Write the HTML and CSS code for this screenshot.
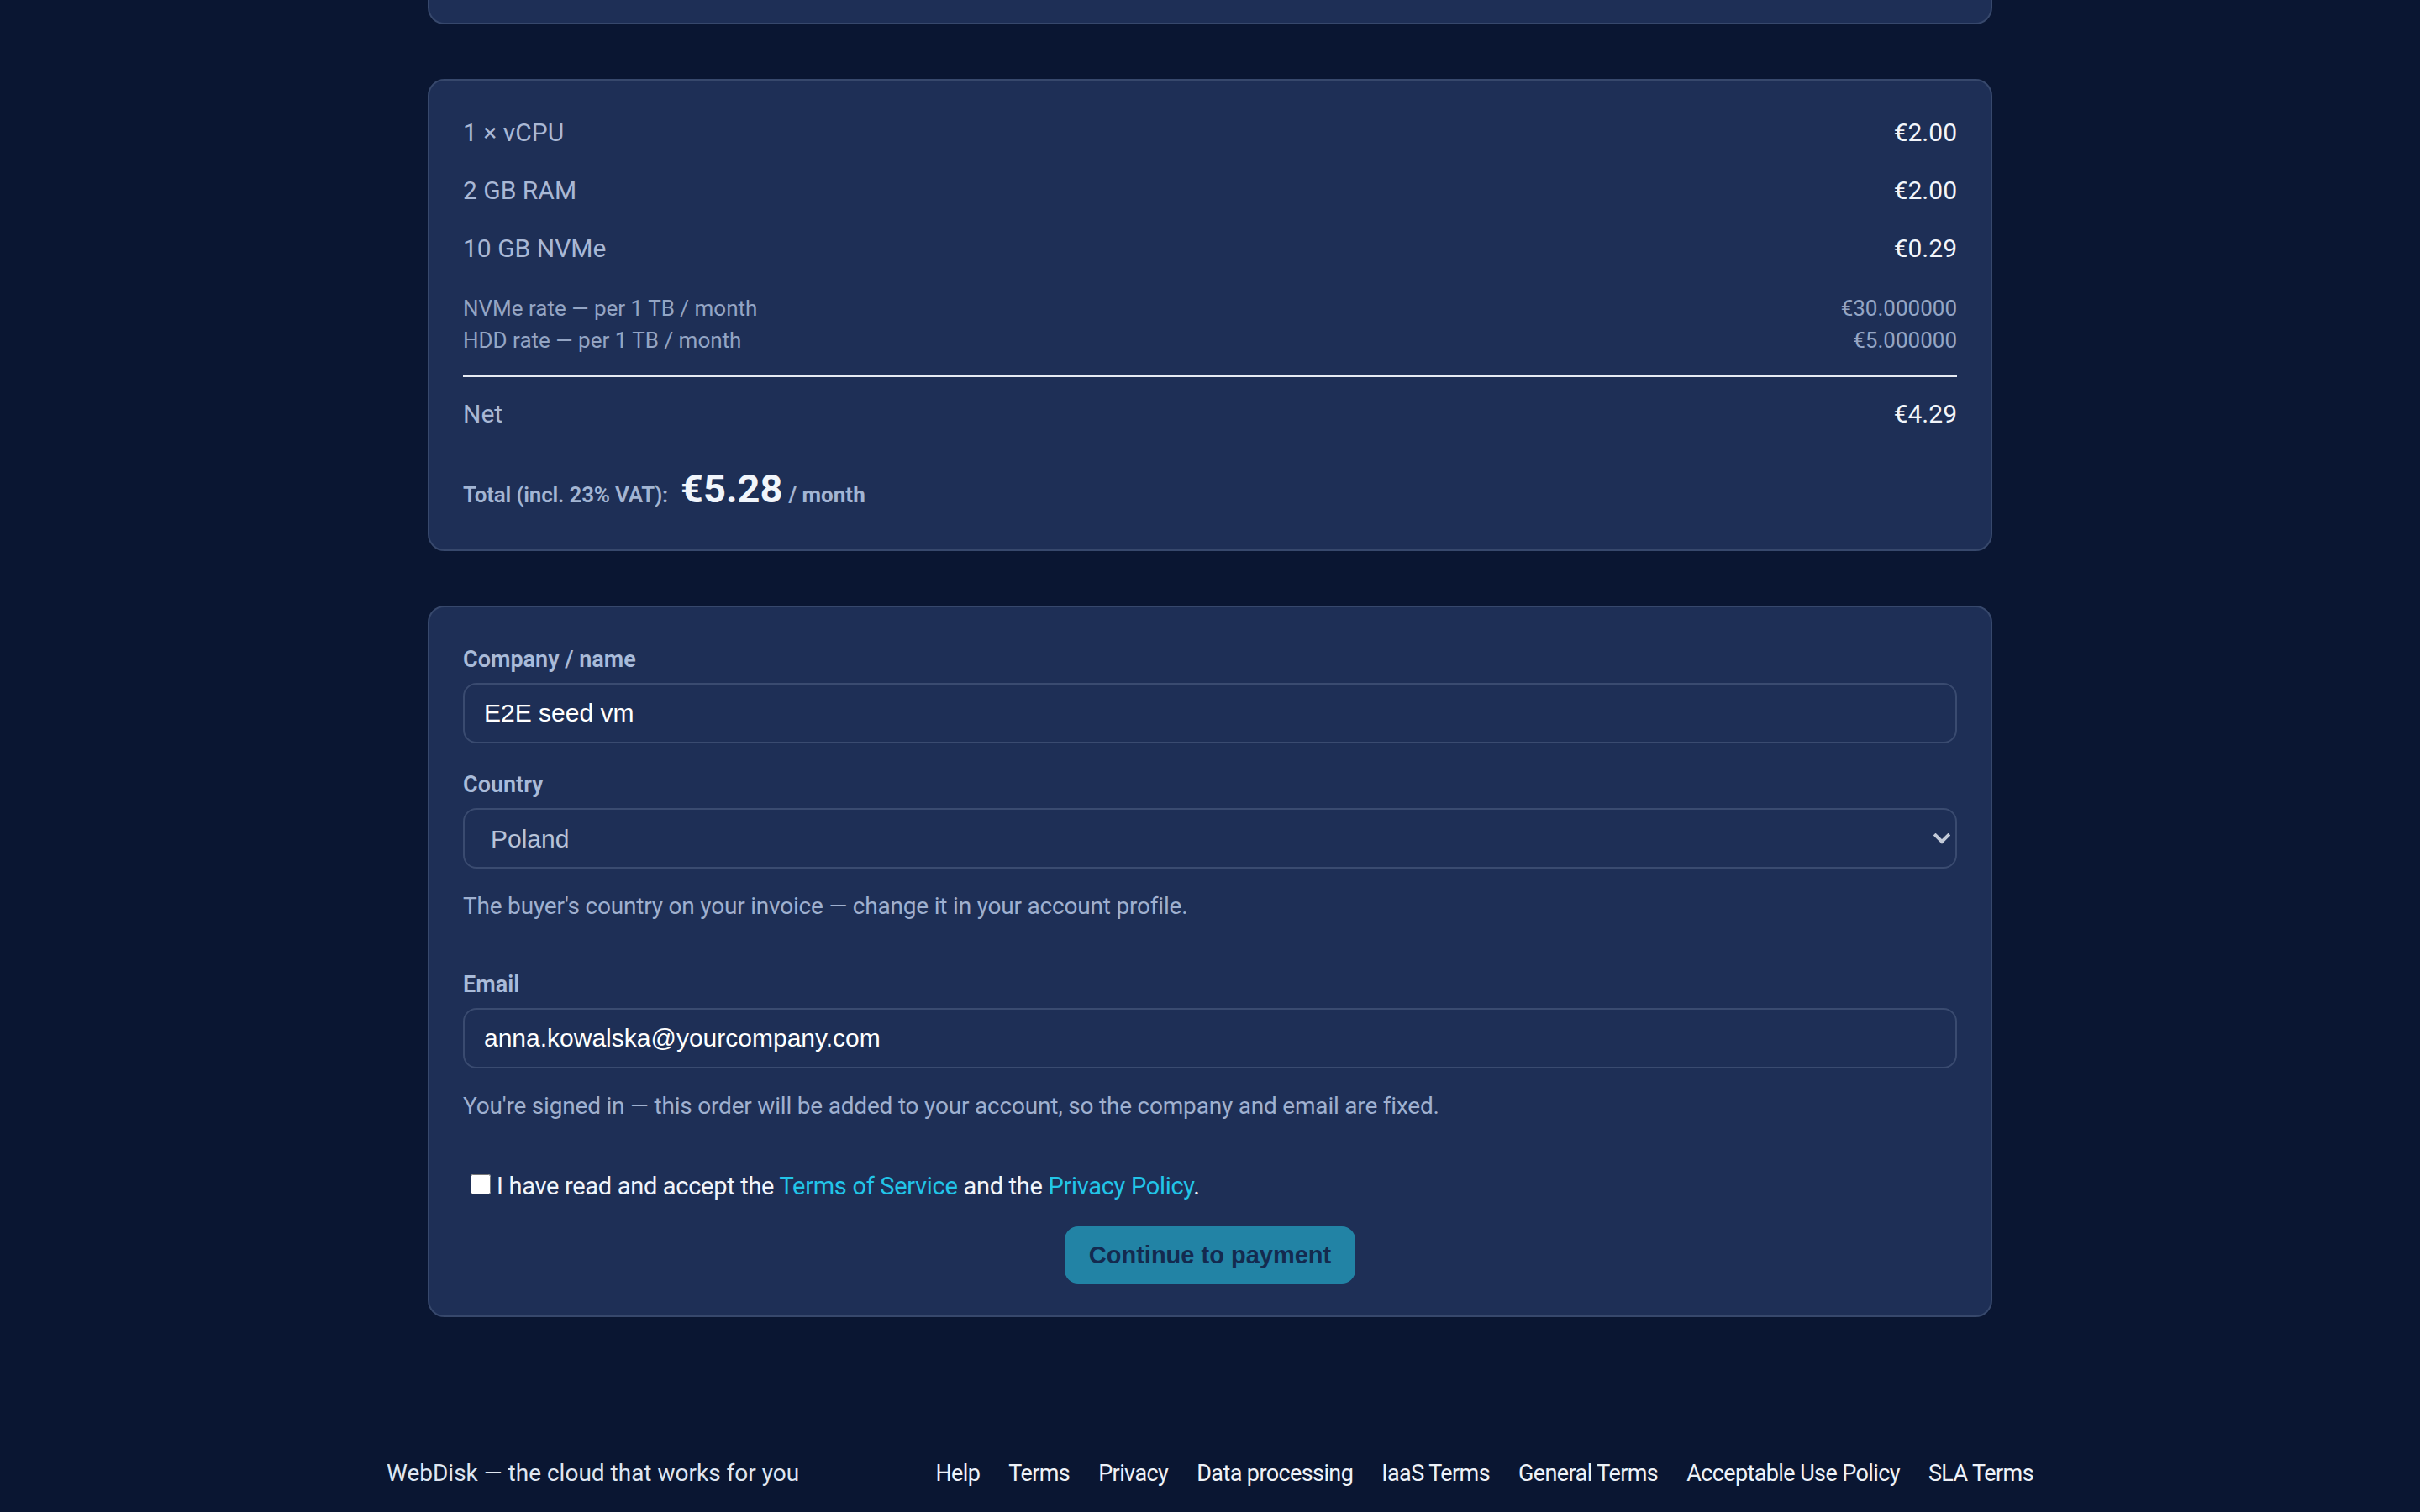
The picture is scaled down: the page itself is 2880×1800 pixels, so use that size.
FILE: index.html
```html
<!DOCTYPE html>
<html lang="en">
<head>
  <meta charset="UTF-8" />
  <meta name="viewport" content="width=device-width, initial-scale=1.0"/>
  <title>WebDisk — Order VM</title>
  <link rel="stylesheet" href="styles.css">
</head>
<body>

  <main class="page">

    <!-- configurator card, scrolled past -->
    <div class="card card-prev"></div>

    <!-- price summary -->
    <section class="card summary">
      <div class="line"><span>1 × vCPU</span><span class="price">€2.00</span></div>
      <div class="line"><span>2 GB RAM</span><span class="price">€2.00</span></div>
      <div class="line"><span>10 GB NVMe</span><span class="price">€0.29</span></div>

      <div class="rates">
        <div class="rate"><span>NVMe rate — per 1 TB / month</span><span>€30.000000</span></div>
        <div class="rate"><span>HDD rate — per 1 TB / month</span><span>€5.000000</span></div>
      </div>

      <div class="line net"><span>Net</span><span class="price">€4.29</span></div>

      <div class="total">
        <span class="total-label">Total (incl. 23% VAT):</span>
        <span class="total-amount">€5.28</span>
        <span class="total-per">/ month</span>
      </div>
    </section>

    <!-- buyer details -->
    <form class="card order-form" onsubmit="return false;">
      <div class="field">
        <label for="company">Company / name</label>
        <input type="text" id="company" value="E2E seed vm" readonly />
      </div>

      <div class="field">
        <label for="country">Country</label>
        <div class="select-wrap">
          <select id="country" disabled>
            <option>Poland</option>
          </select>
          <svg class="chevron" width="20" height="13" viewBox="0 0 20 13">
            <path d="M2.5 2.5 L10 10 L17.5 2.5" fill="none" stroke="currentColor" stroke-width="4" stroke-linecap="square"/>
          </svg>
        </div>
        <p class="hint">The buyer's country on your invoice — change it in your account profile.</p>
      </div>

      <div class="field">
        <label for="email">Email</label>
        <input type="email" id="email" value="anna.kowalska@yourcompany.com" readonly />
        <p class="hint">You're signed in — this order will be added to your account, so the company and email are fixed.</p>
      </div>

      <div class="consent">
        <input type="checkbox" id="accept" /><label for="accept">I have read and accept the <a href="#">Terms of Service</a> and the <a href="#">Privacy Policy</a>.</label>
      </div>

      <div class="actions">
        <button type="submit" class="pay-btn" disabled>Continue to payment</button>
      </div>
    </form>

  </main>

  <footer class="footer">
    <div class="tagline">WebDisk — the cloud that works for you</div>
    <nav class="footer-links">
      <a href="#">Help</a>
      <a href="#">Terms</a>
      <a href="#">Privacy</a>
      <a href="#">Data processing</a>
      <a href="#">IaaS Terms</a>
      <a href="#">General Terms</a>
      <a href="#">Acceptable Use Policy</a>
      <a href="#">SLA Terms</a>
    </nav>
  </footer>

</body>
</html>
```

FILE: styles.css
```css
body {
  margin: 0;
  padding: 0;
  font-family: 'Segoe UI', Roboto, 'Noto Sans', sans-serif;
  background: #0a1632;
  color: #e2e8f0;
}

.page {
  width: 1862px;
  margin: 0 auto;
  display: flex;
  flex-direction: column;
  gap: 65px;
}

.card {
  background: #1e2f56;
  border: 2px solid #37486c;
  border-radius: 20px;
  box-sizing: border-box;
}

.card-prev {
  height: 29px;
  border-top: none;
  border-radius: 0 0 20px 20px;
}

/* summary */
.summary {
  padding: 27px 40px 35px;
}

.line {
  display: flex;
  justify-content: space-between;
  padding: 12px 0;
  font-size: 30px;
  line-height: 45px;
  color: #a9b8d5;
}

.line .price {
  color: #f3f6fb;
}

.rates {
  margin-top: 18px;
  padding-bottom: 23px;
  border-bottom: 2px solid #e6ebf3;
  font-size: 26px;
  line-height: 38px;
  color: #94a5c4;
}

.rate {
  display: flex;
  justify-content: space-between;
}

.line.net {
  padding-top: 21px;
}

.total {
  display: flex;
  align-items: baseline;
  gap: 15px;
  margin-top: 25px;
  line-height: 60px;
  color: #a3b5d3;
}

.total-label {
  font-size: 26px;
  font-weight: 600;
  letter-spacing: -0.2px;
}

.total-amount {
  font-size: 47px;
  font-weight: 700;
  color: #f1f5fb;
  margin-right: -8px;
}

.total-per {
  font-size: 26px;
  font-weight: 700;
}

/* form */
.order-form {
  padding: 42px 40px 38px;
}

.field {
  margin-bottom: 29px;
}

.field label {
  display: block;
  font-size: 27px;
  line-height: 40px;
  font-weight: 600;
  color: #a9bbd9;
  margin-bottom: 8px;
}

.field input,
.field select {
  display: block;
  width: 100%;
  height: 72px;
  box-sizing: border-box;
  border: 2px solid #3a4b70;
  border-radius: 16px;
  background: #1e2f56;
  color: #ffffff;
  font-family: 'Liberation Sans', Arial, sans-serif;
  font-size: 30px;
  padding: 0 23px;
  outline: none;
}

.field select {
  appearance: none;
  -webkit-appearance: none;
  padding-left: 31px;
  color: #b8c3d8;
  opacity: 1;
}

.select-wrap {
  position: relative;
}

.chevron {
  position: absolute;
  right: 8px;
  top: 30px;
  color: #c3cad8;
}

.hint {
  margin: 24px 0 52px;
  font-size: 28px;
  line-height: 42px;
  color: #9fb0cf;
  letter-spacing: -0.2px;
}

.consent {
  margin-top: 51px;
  font-size: 29px;
  line-height: 45px;
  letter-spacing: -0.3px;
  color: #f1f5fb;
}

.consent input {
  width: 24px;
  height: 24px;
  margin: 0 7px 0 9px;
  vertical-align: baseline;
}

.consent a {
  color: #22c5e8;
  text-decoration: none;
}

.actions {
  text-align: center;
  margin-top: 25px;
}

.pay-btn {
  height: 68px;
  padding: 0 29px;
  border: none;
  border-radius: 16px;
  background: #2283a5;
  color: #142a4f;
  font-family: 'Liberation Sans', Arial, sans-serif;
  font-size: 29px;
  font-weight: bold;
}

/* footer */
.footer {
  width: 1960px;
  margin: 165px auto 0;
  padding-bottom: 25px;
  display: flex;
  justify-content: space-between;
  font-size: 28px;
  line-height: 42px;
}

.tagline {
  color: #dfe6f1;
}

.footer-links {
  display: flex;
  gap: 34px;
  font-size: 27px;
  letter-spacing: -0.6px;
}

.footer-links a {
  color: #eef2f8;
  text-decoration: none;
}
```
